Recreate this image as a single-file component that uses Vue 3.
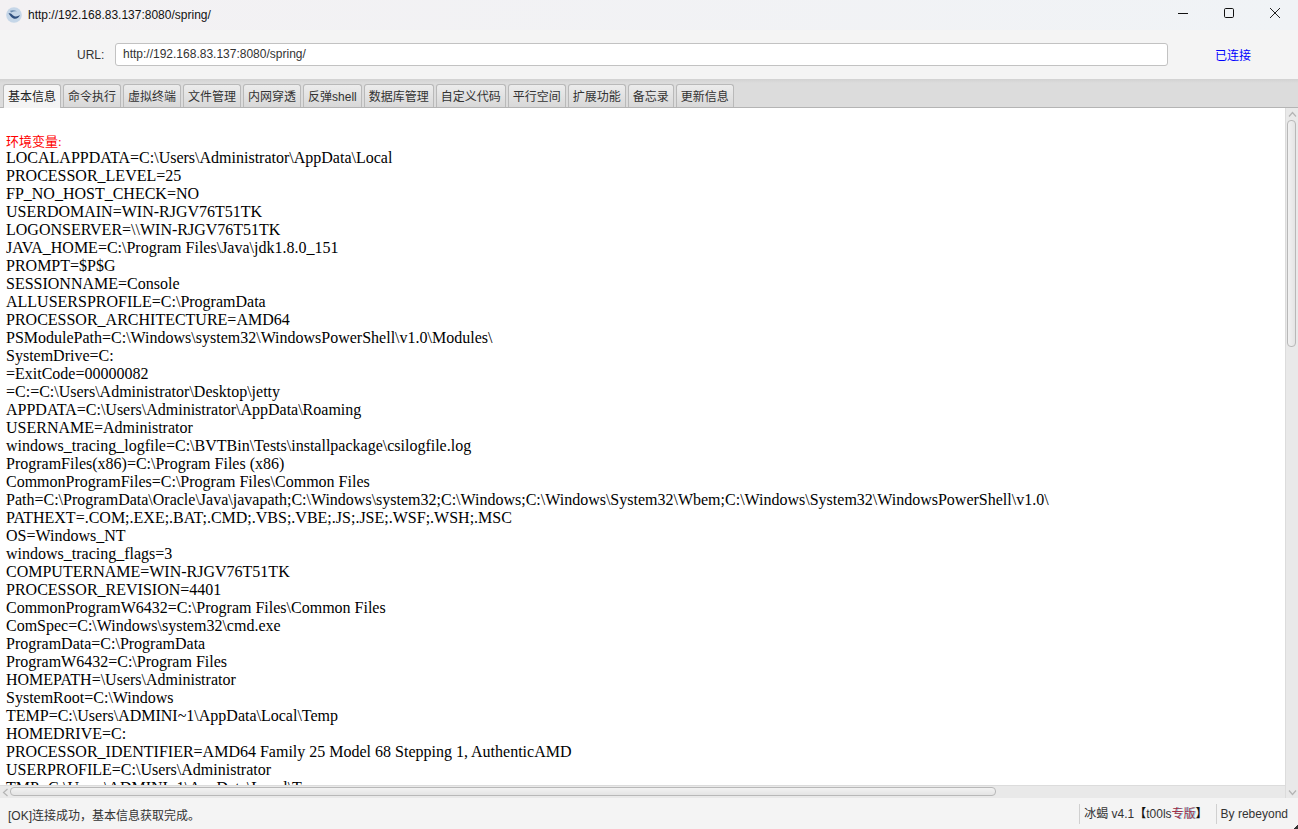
<script setup>
const tabs = ['基本信息','命令执行','虚拟终端','文件管理','内网穿透','反弹shell','数据库管理','自定义代码','平行空间','扩展功能','备忘录','更新信息']
const lines = String.raw`LOCALAPPDATA=C:\Users\Administrator\AppData\Local
PROCESSOR_LEVEL=25
FP_NO_HOST_CHECK=NO
USERDOMAIN=WIN-RJGV76T51TK
LOGONSERVER=\\WIN-RJGV76T51TK
JAVA_HOME=C:\Program Files\Java\jdk1.8.0_151
PROMPT=$P$G
SESSIONNAME=Console
ALLUSERSPROFILE=C:\ProgramData
PROCESSOR_ARCHITECTURE=AMD64
PSModulePath=C:\Windows\system32\WindowsPowerShell\v1.0\Modules\
SystemDrive=C:
=ExitCode=00000082
=C:=C:\Users\Administrator\Desktop\jetty
APPDATA=C:\Users\Administrator\AppData\Roaming
USERNAME=Administrator
windows_tracing_logfile=C:\BVTBin\Tests\installpackage\csilogfile.log
ProgramFiles(x86)=C:\Program Files (x86)
CommonProgramFiles=C:\Program Files\Common Files
Path=C:\ProgramData\Oracle\Java\javapath;C:\Windows\system32;C:\Windows;C:\Windows\System32\Wbem;C:\Windows\System32\WindowsPowerShell\v1.0\
PATHEXT=.COM;.EXE;.BAT;.CMD;.VBS;.VBE;.JS;.JSE;.WSF;.WSH;.MSC
OS=Windows_NT
windows_tracing_flags=3
COMPUTERNAME=WIN-RJGV76T51TK
PROCESSOR_REVISION=4401
CommonProgramW6432=C:\Program Files\Common Files
ComSpec=C:\Windows\system32\cmd.exe
ProgramData=C:\ProgramData
ProgramW6432=C:\Program Files
HOMEPATH=\Users\Administrator
SystemRoot=C:\Windows
TEMP=C:\Users\ADMINI~1\AppData\Local\Temp
HOMEDRIVE=C:
PROCESSOR_IDENTIFIER=AMD64 Family 25 Model 68 Stepping 1, AuthenticAMD
USERPROFILE=C:\Users\Administrator
TMP=C:\Users\ADMINI~1\AppData\Local\Temp`.split('\n')
</script>

<template>
  <div class="win">
    <header class="title">
      <svg class="logo" width="16" height="16" viewBox="0 0 16 16">
        <circle cx="8" cy="8" r="7.8" fill="#c5d6e8"/>
        <path d="M2.5 6.5 C5 5.5 6 8 8 9 C10 10 12 9.5 14 8 C13 11 10 12.5 7.5 11.5 C5 10.5 4 8 2.5 6.5 Z" fill="#2f4f7f"/>
        <path d="M4 3.8 C6 3 8.5 3 11 4.2 C8.5 4.2 6.5 4.5 5 5.5 Z" fill="#6d8db0"/>
      </svg>
      <span class="title-text">http://192.168.83.137:8080/spring/</span>
      <div class="controls">
        <svg width="12" height="12" viewBox="0 0 12 12"><path d="M1 6.5H11" stroke="#111" fill="none"/></svg>
        <svg width="12" height="12" viewBox="0 0 12 12"><rect x="1.5" y="1.5" width="9" height="9" rx="1.2" stroke="#111" fill="none"/></svg>
        <svg width="12" height="12" viewBox="0 0 12 12"><path d="M1 1L11 11M11 1L1 11" stroke="#222" fill="none"/></svg>
      </div>
    </header>

    <div class="toolbar">
      <label class="url-label">URL:</label>
      <div class="url-input">http://192.168.83.137:8080/spring/</div>
      <span class="status-link">已连接</span>
    </div>

    <nav class="tabs">
      <div v-for="(t, i) in tabs" :key="t" class="tab" :class="{ active: i === 0 }">{{ t }}</div>
    </nav>

    <main class="main">
      <div class="content">
        <div class="body">
          <p class="blank"></p>
          <p class="env">环境变量:</p>
          <p v-for="l in lines" :key="l" class="line">{{ l }}</p>
        </div>
        <div class="hbar">
          <span class="arrow">
            <svg width="7" height="9" viewBox="0 0 7 9"><path d="M5.5 1L1.5 4.5L5.5 8" fill="none" stroke="#b4b4b4" stroke-width="1.2"/></svg>
          </span>
          <div class="htrack"><div class="hthumb"></div></div>
          <span class="arrow"></span>
        </div>
      </div>
      <div class="vbar">
        <span class="varrow">
          <svg width="9" height="7" viewBox="0 0 9 7"><path d="M1 5.5L4.5 1.5L8 5.5" fill="none" stroke="#b4b4b4" stroke-width="1.2"/></svg>
        </span>
        <div class="vtrack"><div class="vthumb"></div></div>
        <span class="varrow">
          <svg width="9" height="7" viewBox="0 0 9 7"><path d="M1 1.5L4.5 5.5L8 1.5" fill="none" stroke="#b4b4b4" stroke-width="1.2"/></svg>
        </span>
      </div>
    </main>

    <footer class="statusbar">
      <span class="msg">[OK]连接成功，基本信息获取完成。</span>
      <span class="ver">冰蝎 v4.1<b class="br open">【</b>t00ls<span class="zb">专版</span><b class="br close">】</b></span>
      <span class="by">By rebeyond</span>
    </footer>
    <span class="corner"></span>
  </div>
</template>

<style>
html, body { margin: 0; overflow: hidden; }
</style>

<style scoped>
.win {
  position: relative;
  width: 1298px;
  height: 829px;
  display: flex;
  flex-direction: column;
  overflow: hidden;
  background: #f4f4f4;
  font-family: "Liberation Sans", "Noto Sans CJK SC", sans-serif;
  font-size: 12px;
  color: #333;
}
.title {
  height: 30px;
  flex: none;
  display: flex;
  align-items: center;
  padding-left: 6px;
  background: linear-gradient(90deg, #f3f1f3, #f0f3f6);
}
.logo { flex: none; margin-right: 6px; }
.title-text { color: #111; font-size: 12px; font-family: "Liberation Sans", sans-serif; }
.controls {
  margin-left: auto;
  display: flex;
  gap: 34px;
  padding-right: 17px;
  align-items: center;
  height: 100%;
  margin-top: -4px;
}
.toolbar {
  height: 49px;
  flex: none;
  display: flex;
  align-items: center;
  box-sizing: border-box;
  padding-left: 77px;
}
.url-label { width: 38px; flex: none; color: #333; }
.url-input {
  width: 1053px;
  height: 23px;
  box-sizing: border-box;
  flex: none;
  background: #fff;
  border: 1px solid #c2c2c2;
  border-radius: 3px;
  padding-left: 7px;
  line-height: 21px;
  color: #333;
}
.status-link { margin-left: 47px; color: #0000ff; }
.tabs {
  height: 29px;
  flex: none;
  box-sizing: border-box;
  display: flex;
  align-items: flex-end;
  gap: 2px;
  padding-left: 3px;
  background: linear-gradient(#d2d2d2, #dcdcdc 4px);
  border-bottom: 1px solid #b4b4b4;
}
.tab {
  height: 23px;
  box-sizing: border-box;
  padding: 0 4px;
  line-height: 24px;
  border: 1px solid #b9b9b9;
  border-bottom: 0;
  border-radius: 3px 3px 0 0;
  background: linear-gradient(#ececec, #d8d8d8);
  color: #333;
  white-space: nowrap;
}
.tab.active { background: #f4f4f4; height: 24px; margin-bottom: -1px; line-height: 25px; color: #222; }
.main { flex: 1; min-height: 0; display: flex; background: #fff; }
.content { flex: 1; min-width: 0; display: flex; flex-direction: column; }
.body {
  flex: 1;
  min-height: 0;
  overflow: hidden;
  padding-left: 6px;
  font-family: "Liberation Serif", "Noto Sans CJK SC", serif;
  font-size: 16px;
  line-height: 18px;
  color: #000;
}
.body p { margin: 0; height: 18px; white-space: nowrap; }
.body .blank { height: 25px; }
.body .env { color: #ff0000; font-size: 13px; height: 16px; }
.hbar { height: 13px; flex: none; box-sizing: border-box; display: flex; background: #e9e9e9; border-top: 1px solid #dcdcdc; }
.arrow { width: 10px; flex: none; display: flex; align-items: center; justify-content: center; }
.htrack { flex: 1; padding-top: 1px; }
.hthumb { width: 986px; height: 9px; box-sizing: border-box; border: 1px solid #b8b8b8; border-radius: 4px; background: linear-gradient(#f2f2f2, #e4e4e4); }
.vbar { width: 13px; flex: none; display: flex; flex-direction: column; background: #e9e9e9; border-left: 1px solid #dcdcdc; box-sizing: border-box; }
.varrow { height: 12px; flex: none; display: flex; align-items: center; justify-content: center; }
.vtrack { flex: 1; padding: 0 1px; }
.vthumb { height: 227px; width: 9px; box-sizing: border-box; border: 1px solid #b8b8b8; border-radius: 4px; background: linear-gradient(90deg, #f2f2f2, #e4e4e4); }
.statusbar { height: 31px; flex: none; display: flex; align-items: center; background: #f4f4f4; color: #333; box-sizing: border-box; padding-top: 1px; }
.msg { flex: 1; padding-left: 8px; }
.ver { border-left: 1px solid #d0d0d0; padding: 0 8px 0 4px; line-height: 20px; white-space: nowrap; }
.br { display: inline-block; width: 12px; color: #111; font-weight: 700; }
.br.open { text-align: right; }
.br.close { text-align: left; }
.zb { color: #a0304a; text-shadow: 1px 0 0 rgba(0, 170, 190, 0.55); }
.by { border-left: 1px solid #d0d0d0; padding: 0 10px 0 4px; line-height: 20px; }
.corner {
  position: absolute;
  right: 0;
  bottom: 0;
  width: 5px;
  height: 5px;
  background: linear-gradient(135deg, transparent 50%, #333 50%);
}
</style>
